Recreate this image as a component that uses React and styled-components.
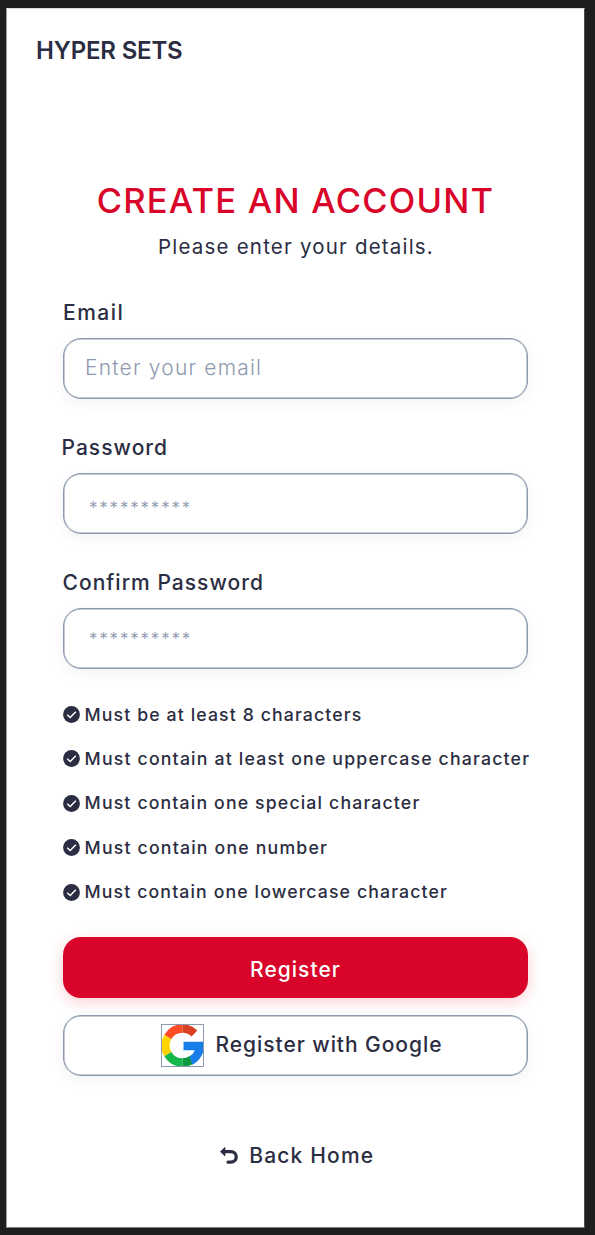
import React from 'react';
import styled, { createGlobalStyle } from 'styled-components';

const ink = '#2b2d42';
const slate = '#8d99ae';
const red = '#d90429';

const GlobalStyle = createGlobalStyle`
  * { box-sizing: border-box; }
  body {
    margin: 0;
    background: #1e1e1e;
    color: ${ink};
    font-family: Inter, "Liberation Sans", sans-serif;
  }
`;

const Page = styled.div`
  min-height: 1235px;
  padding: 8px 10px 7px 6px;
`;

const Screen = styled.main`
  width: 579px;
  height: 1220px;
  padding: 27px 56px 0;
  background: #fff;
  border: 1px solid;
  border-color: #dcdcdc #4c4e4e #7d8280 #9a9a9a;
`;

const Brand = styled.div`
  margin-left: -27px;
  font-size: 24px;
  font-weight: 600;
  line-height: 30px;
  letter-spacing: -0.18px;
`;

const Title = styled.h1`
  margin: 110px 0 0;
  color: ${red};
  font-size: 34.5px;
  font-weight: 500;
  line-height: 50px;
  letter-spacing: 1.24px;
  text-align: center;
  white-space: nowrap;
`;

const Subtitle = styled.p`
  margin: 6px 0 35px;
  padding-left: 1px;
  font-size: 20.5px;
  line-height: 30px;
  letter-spacing: 1.2px;
  text-align: center;
`;

const Form = styled.form`
  display: flex;
  flex-direction: column;
`;

const Fields = styled.div`
  display: flex;
  flex-direction: column;
  gap: 33px;
`;

const Field = styled.label`
  display: flex;
  flex-direction: column;
  gap: 10px;
`;

const Label = styled.span`
  margin-left: ${p => p.$offset || 0}px;
  padding-top: 1px;
  font-size: 21px;
  font-weight: 500;
  line-height: 30px;
  letter-spacing: ${p => p.$tracking || 1.03}px;
`;

const Input = styled.input`
  width: 465px;
  height: 61px;
  padding: ${p => p.$padding};
  border: 1px solid ${slate};
  border-radius: 18px;
  outline: none;
  background: #fff;
  box-shadow: inset 0 0 0 0.5px ${slate}, 0 4px 15px rgba(0, 0, 0, 0.05);
  font-family: inherit;
  font-size: ${p => p.$size}px;
  font-weight: 300;
  letter-spacing: ${p => p.$tracking}px;
  &::placeholder { color: ${slate}; opacity: 1; }
`;

const Rules = styled.ul`
  display: flex;
  flex-direction: column;
  gap: 20.4px;
  margin: 33.6px 0 32.8px;
  padding: 0;
  list-style: none;
`;

const Rule = styled.li`
  display: flex;
  align-items: center;
  gap: 4.6px;
  font-size: 17.7px;
  font-weight: 500;
  line-height: 24px;
  letter-spacing: ${p => p.$tracking}px;
  white-space: nowrap;
  svg { flex: none; }
`;

const Button = styled.button`
  display: flex;
  align-items: center;
  justify-content: center;
  gap: 12px;
  width: 465px;
  height: 61px;
  border-radius: 18px;
  font-family: inherit;
  font-size: 21px;
  font-weight: 500;
  line-height: 30px;
`;

const RegisterButton = styled(Button)`
  padding: 5px 0 0;
  border: 0;
  background: ${red};
  color: #fff;
  letter-spacing: 1.03px;
  box-shadow: 0 4px 15px rgba(239, 35, 60, 0.22);
`;

const GoogleButton = styled(Button)`
  margin-top: 17px;
  padding: 0 0 0 12px;
  border: 1px solid ${slate};
  background: #fff;
  color: ${ink};
  letter-spacing: 0.94px;
  box-shadow: inset 0 0 0 0.5px ${slate}, 0 4px 15px rgba(0, 0, 0, 0.05);
`;

const GoogleLabel = styled.span`
  padding-bottom: 1px;
`;

const GoogleFrame = styled.span`
  display: flex;
  width: 43px;
  height: 43px;
  border: 1px solid ${slate};
`;

const BackLink = styled.a`
  display: flex;
  align-items: center;
  justify-content: center;
  gap: 11.5px;
  margin-top: 65px;
  padding-left: 3px;
  font-size: 21px;
  font-weight: 500;
  line-height: 30px;
  letter-spacing: 1.18px;
`;

const CheckIcon = () => (
  <svg width="17" height="17" viewBox="0 0 17 17">
    <circle cx="8.5" cy="8.5" r="8.4" fill={ink} />
    <path d="M4.2 8.7 7.2 11.5 12.8 5.8" fill="none" stroke="#fff" strokeWidth="1.5" />
  </svg>
);

const GoogleIcon = () => (
  <svg width="41" height="41" viewBox="3 3 120 122">
    <path fill="#ffd500" d="M9 32A63 63 0 0 0 9 96L30 83A38 38 0 0 1 30 45Z" />
    <path fill="#ff4b26" d="M9 32A63 63 0 0 1 63 1V26A38 38 0 0 0 30 45Z" />
    <path fill="#d93f21" d="M63 1A63 63 0 0 1 107 19L90 37A38 38 0 0 0 63 26Z" />
    <path fill="#14b84b" d="M9 96A63 63 0 0 0 63 127V102A38 38 0 0 1 30 83Z" />
    <path fill="#0f993e" d="M63 127A63 63 0 0 0 94 119L84 95A38 38 0 0 1 63 102Z" />
    <path fill="#167ee6" d="M66 53H126A63 63 0 0 1 92 121L84 96A38 38 0 0 0 100 78H66Z" />
  </svg>
);

const BackIcon = () => (
  <svg width="18" height="17" viewBox="0 0 54 51">
    <path fill={ink} stroke={ink} strokeWidth="2" strokeLinejoin="round" d="M1 14 15 1V27Z" />
    <path fill="none" stroke={ink} strokeWidth="9.5" strokeLinecap="round" d="M12 14H33A15.5 15.5 0 0 1 33 45.5H24" />
  </svg>
);

const rules = [
  ['Must be at least 8 characters', 1.11],
  ['Must contain at least one uppercase character', 1.18],
  ['Must contain one special character', 1.15],
  ['Must contain one number', 1.19],
  ['Must contain one lowercase character', 1.12],
];

export default function App() {
  return (
    <Page>
      <GlobalStyle />
      <Screen>
        <Brand>HYPER SETS</Brand>
        <Title>CREATE AN ACCOUNT</Title>
        <Subtitle>Please enter your details.</Subtitle>
        <Form>
          <Fields>
            <Field>
              <Label $tracking={1.5}>Email</Label>
              <Input type="email" placeholder="Enter your email" $size={21} $tracking={1.2} $padding="0 20px 3px 21px" />
            </Field>
            <Field>
              <Label $offset={-1.5}>Password</Label>
              <Input type="password" placeholder="**********" $size={17} $tracking={1.8} $padding="9px 20px 0 25px" />
            </Field>
            <Field>
              <Label $offset={-0.5}>Confirm Password</Label>
              <Input type="password" placeholder="**********" $size={17} $tracking={1.8} $padding="1px 20px 0 25px" />
            </Field>
          </Fields>
          <Rules>
            {rules.map(([text, tracking]) => (
              <Rule key={text} $tracking={tracking}>
                <CheckIcon />
                {text}
              </Rule>
            ))}
          </Rules>
          <RegisterButton type="button">Register</RegisterButton>
          <GoogleButton type="button">
            <GoogleFrame><GoogleIcon /></GoogleFrame>
            <GoogleLabel>Register with Google</GoogleLabel>
          </GoogleButton>
        </Form>
        <BackLink>
          <BackIcon />
          Back Home
        </BackLink>
      </Screen>
    </Page>
  );
}
